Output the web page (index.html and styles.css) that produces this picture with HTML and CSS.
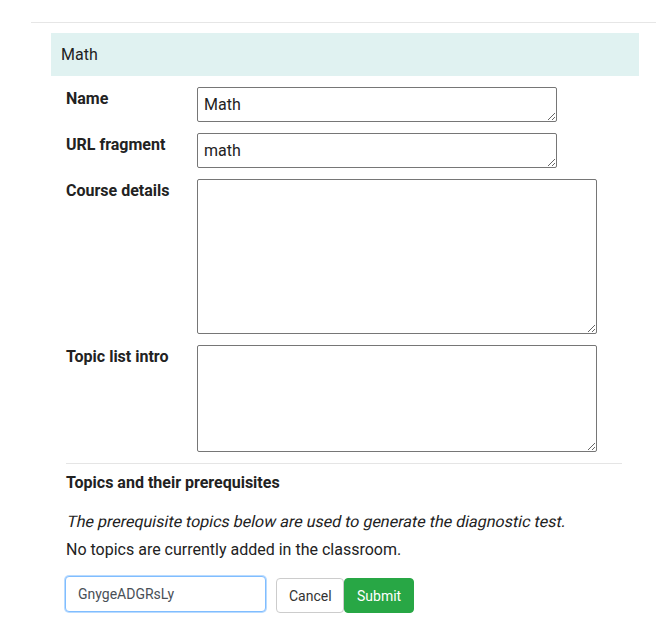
FILE: index.html
```html
<!DOCTYPE html>
<html>
<head>
<meta charset="utf-8">
<link rel="stylesheet" href="styles.css">
</head>
<body>
<div class="topbar"></div>
<div class="page">
  <div class="panel-head">Math</div>
  <div class="panel-body">
    <div class="form-grid">
      <label class="field-label">Name</label>
      <textarea class="field field-short">Math</textarea>
      <label class="field-label">URL fragment</label>
      <textarea class="field field-short">math</textarea>
      <label class="field-label">Course details</label>
      <textarea class="field field-details"></textarea>
      <label class="field-label">Topic list intro</label>
      <textarea class="field field-intro"></textarea>
    </div>
    <hr class="divider">
    <div class="section-title">Topics and their prerequisites</div>
    <p class="note"><span class="oblique">The prerequisite topics below are used to generate the diagnostic test.</span></p>
    <p class="empty">No topics are currently added in the classroom.</p>
    <div class="actions">
      <input class="id-input" type="text" value="GnygeADGRsLy">
      <div class="btns">
        <button class="btn btn-cancel">Cancel</button>
        <button class="btn btn-submit">Submit</button>
      </div>
    </div>
  </div>
</div>
</body>
</html>
```

FILE: styles.css
```css
html, body {
  margin: 0;
  padding: 0;
  background: #ffffff;
}
body {
  font-family: Roboto, "Liberation Sans", Arial, sans-serif;
  font-size: 16px;
  color: #212121;
}
.topbar {
  margin-left: 31px;
  height: 22px;
  border-bottom: 1px solid #e6e6e6;
}
.page {
  width: 588px;
  margin-left: 51px;
  margin-top: 10px;
}
.panel-head {
  background: #e0f2f1;
  height: 43px;
  box-sizing: border-box;
  padding: 12px 10px 11px;
  line-height: 20px;
  font-size: 16px;
  color: #222;
}
.panel-body {
  padding: 11px 17px 0 15px;
}
.form-grid {
  display: grid;
  grid-template-columns: 131px auto;
  row-gap: 11px;
  align-items: start;
}
.field-label {
  font-weight: bold;
  line-height: 20px;
  padding-top: 2px;
  color: #222;
}
.field {
  display: block;
  box-sizing: border-box;
  margin: 0;
  padding: 7px 6px 6px;
  font-family: Roboto, "Liberation Sans", Arial, sans-serif;
  font-size: 16px;
  color: #222;
  border: 1px solid #767676;
  border-radius: 2px;
  background: #fff;
}
.field-short {
  width: 360px;
  height: 35px;
}
.field-details {
  width: 400px;
  height: 155px;
}
.field-intro {
  width: 400px;
  height: 107px;
}
.divider {
  border: 0;
  border-top: 1px solid #e5e5e5;
  margin: 11px 0 0 0;
  height: 0;
}
.section-title {
  margin-top: 9px;
  font-weight: bold;
  line-height: 20px;
  color: #222;
}
.note {
  margin: 15px 0 0 0;
  line-height: 28px;
  color: #222;
}
.oblique {
  display: inline-block;
  transform: skewX(-12deg);
  transform-origin: 0 70%;
}
.empty {
  margin: 0;
  line-height: 28px;
  color: #222;
}
.actions {
  display: flex;
  align-items: flex-start;
  margin-top: 12px;
  margin-left: -1px;
}
.id-input {
  box-sizing: border-box;
  width: 201px;
  height: 36px;
  margin: 0;
  padding: 0 12px;
  font-family: Roboto, "Liberation Sans", Arial, sans-serif;
  font-size: 14px;
  color: #495057;
  border: 1px solid #80bdff;
  border-radius: 4px;
  box-shadow: 0 0 0 1px rgba(128, 189, 255, 0.55);
  outline: none;
}
.btns {
  display: flex;
  margin-left: 10px;
  margin-top: 2px;
}
.btn {
  box-sizing: border-box;
  height: 35px;
  margin: 0;
  padding: 0 12px;
  font-family: Roboto, "Liberation Sans", Arial, sans-serif;
  font-size: 14px;
  border-radius: 4px;
  cursor: pointer;
}
.btn-cancel {
  width: 68px;
  background: #fff;
  color: #333;
  border: 1px solid #cccccc;
}
.btn-submit {
  width: 70px;
  background: #28a745;
  color: #fff;
  border: 1px solid #28a745;
}
```
